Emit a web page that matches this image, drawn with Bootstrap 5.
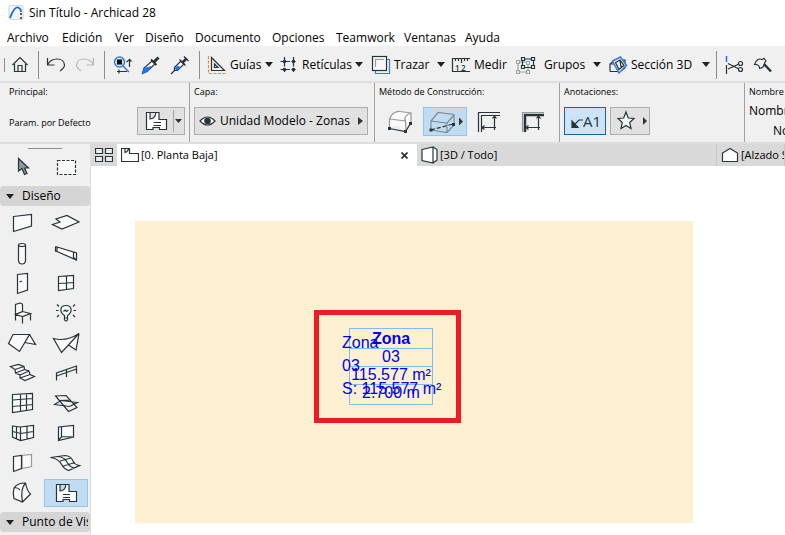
<!DOCTYPE html>
<html lang="es">
<head>
<meta charset="utf-8">
<meta name="viewport" content="width=device-width, initial-scale=1">
<title>Sin Título - Archicad 28</title>
<link href="https://cdn.jsdelivr.net/npm/bootstrap@5.3.0/dist/css/bootstrap.min.css" rel="stylesheet">
<style>
:root{--ink:#27343a;--panel:#f0f0f0;--shade:#d9d9d9;--line:#a0a0a0;--sel:#bfdcf3;--selline:#91c6f4}
body{font-family:"Open Sans","Noto Sans",sans-serif;font-size:12px;line-height:16px;color:#000;background:#fff;overflow:hidden}
button{font:inherit;color:inherit;background:none;border:0;padding:0;white-space:nowrap;text-align:left}
svg{flex:none;display:block;fill:none;stroke:var(--ink);stroke-width:1.2}
svg text{stroke:none;fill:var(--ink)}
.titlebar{height:26px;padding-left:8px;gap:5px}
.menubar{height:20px;padding:3px 0 0 7px;display:grid;align-items:center;grid-template-columns:55px 53px 30px 50px 77px 64px 68px 61px auto}
.menubar a{color:#000;text-decoration:none;white-space:nowrap}
.tools{height:37px;padding:2px 0 0 4px;background:var(--panel);border-bottom:2px solid #dedede;display:grid;align-items:center;
 grid-template-columns:6px 28px 8px 29px 29px 8px 29px 29px 29px 8px 72px 92px 80px 65px 92px 108px 8px 29px 29px}
.tools button{display:flex;align-items:center;gap:3px}
.rule{width:1px;height:28px;background:#8c8c8c}
.grip{width:1px;height:14px;background:#8c8c8c}
.caret{border:4px solid transparent;border-top:5px solid #222;border-bottom:0;margin-left:auto;margin-right:6px}
.caret.wide{margin-right:9px}
.arrow{border:4px solid transparent;border-left:5px solid #333;border-right:0}
.info{height:61px;background:var(--panel);border-bottom:2px solid #dedede;overflow:hidden}
.pane{flex:0 0 185px;height:59px;padding:1px 4px 0;border-left:1px solid var(--line);white-space:nowrap}
.pane:first-child{flex-basis:189px;padding-left:9px;border-left:0}
.pane:last-child{flex:1 0 0;min-width:0}
.cap{font-size:9px;line-height:16px;height:23px}
.cap.tight{height:19px}
.ctl{height:29px}
.box{height:28px;background:#e1e1e1;border:1px solid #adadad}
.box.wide{width:174px;padding:0 4px}
.box.on{background:#cce4f7;border-color:#1463a5}
.meth{width:44px;height:29px;display:flex;align-items:center;justify-content:center}
.meth.on,.tool.on{background:var(--sel);border:1px solid var(--selline)}
.side{flex:0 0 91px;background:var(--panel);border-right:1px solid #dcdcdc;overflow:hidden}
.handle{width:34px;height:1px;margin:4px 0 3px 28px;background:#8c8c8c}
.pair{display:grid;grid-template-columns:44px 44px}
.tool{width:44px;height:28px;margin:1px 0;display:flex;align-items:center;justify-content:center}
.tool svg{fill:#fafafa}
.tool.on svg{fill:#fff}
.head{width:100%;height:20px;margin:4px 0 2px;padding-left:6px;background:#d5d5d5;border-radius:4px;display:flex;align-items:center;gap:8px;overflow:hidden}
.head .caret{margin:0}
.head span{overflow:hidden;margin-right:2px}
.tabs{height:22px;background:var(--shade)}
.tabs .views{width:26px;display:flex;align-items:center;justify-content:center}
.doc{flex:0 0 300px;display:flex;align-items:center;gap:2px;padding:0 5px 0 4px;font-size:11px;color:#000;border-right:1px solid #c8c8c8}
.doc.active{background:#fff;border-right:0}
.doc:last-child{flex:1 0 0;min-width:0;overflow:hidden}
.stage{padding:55px 92px 12px 44px;background:#fff}
.zone{background:#fcf0d0}
.frame{position:absolute;left:179px;top:89px;width:147px;height:113px;border:5px solid #ed1c24;color:#00e;font:16px/18px "Liberation Sans",Arial,sans-serif;white-space:nowrap}
.stamp{position:absolute;left:30px;top:13px;width:84px;border-collapse:collapse;text-align:center}
.stamp td,.stamp th{border:1px solid #7dbcf5;padding:0;height:18px;vertical-align:top}
.stamp tr:first-child th,.stamp tr:last-child td{height:20px}
.stamp tr:first-child th{vertical-align:middle}
.stamp span{display:flex;justify-content:center;margin:0 -8px;line-height:16px}
.note{position:absolute;left:23px;top:16px;line-height:23px}
</style>
<script src="https://cdn.jsdelivr.net/npm/bootstrap@5.3.0/dist/js/bootstrap.bundle.min.js"></script>
</head>
<body class="vh-100 d-flex flex-column">
<header>
<div class="titlebar d-flex align-items-center">
<svg width="16" height="16" viewBox="0 0 16 16"><rect x="1" y=".5" width="14" height="14" rx="2" fill="#f4f6f9" stroke="#d4d8de"/><path d="M2 13C5 5 8 2 10 2.5C12 3 13 5 13 7" stroke="#1769dd" stroke-width="1.8"/><path d="M13 8v2M13 12v2" stroke="#24508f" stroke-width="1.8"/></svg>
<span>Sin Título - Archicad 28</span></div>
<nav class="menubar" aria-label="Menú"><a href="#">Archivo</a><a href="#">Edición</a><a href="#">Ver</a><a href="#">Diseño</a><a href="#">Documento</a><a href="#">Opciones</a><a href="#">Teamwork</a><a href="#">Ventanas</a><a href="#">Ayuda</a></nav>
<div class="tools" role="toolbar">
<span class="grip"></span>
<button aria-label="Inicio"><svg width="20" height="20" viewBox="9 55 20 20"><path d="M11.500 65L19 57.500L26.500 65M13.500 64V71.500H24.500V64M17 71V65.500H21V71"/></svg></button>
<span class="rule"></span>
<button aria-label="Deshacer"><svg width="20" height="20" viewBox="46 55 20 20"><path d="M47.500 58V65H54.500M47.500 65C51 57 64 57 64.500 65C64.500 68 62 69.500 60 71"/></svg></button>
<button aria-label="Rehacer"><svg width="20" height="20" viewBox="75 55 20 20"><path stroke="#b4b7b8" d="M93.500 58V65H86.500M93.500 65C90 57 77 57 76.500 65C76.500 68 79 69.500 81 71"/></svg></button>
<span class="rule"></span>
<button aria-label="Buscar y seleccionar"><svg width="20" height="20" viewBox="112 55 20 20"><circle cx="119.500" cy="62" r="5" stroke="#2f7be8" stroke-width="1.500"/><path d="M123 66L129 72" stroke="#2f7be8" stroke-width="1.500"/><rect x="117.500" y="60" width="4" height="4" fill="#111" stroke="#111"/><path d="M126.500 62L129.500 59.500V67M129.500 59.500L131.500 61.500M117 71.500H127M119 69.500V73.500"/></svg></button>
<button aria-label="Tomar parámetros"><svg width="20" height="20" viewBox="141 55 20 20"><path d="M142.500 73.500L144 68L152 61L155 64L147 71.500Z" fill="#fff"/><path d="M143 73L144.500 68.500L150 67L148 70.500Z" fill="#1677ff" stroke="#1677ff"/><path d="M151 59.500L156.500 65" stroke-width="1.800"/><path d="M154 62L158.500 57.500" stroke-width="3"/></svg></button>
<button aria-label="Inyectar parámetros"><svg width="20" height="20" viewBox="170 55 20 20"><path d="M171 74L175 70M174.500 67.500L181 61L184 64L177.500 70.500L174.500 70.500Z" fill="#fff"/><path d="M175.500 68.500L178 66.500L180 67.500L177 70Z" fill="#1677ff" stroke="#1677ff"/><path d="M179.500 59.500L185.500 65.500M184 56.500L188.500 61" stroke-width="1.300"/><path d="M182 63L186.500 58.500" stroke-width="2.500"/></svg></button>
<span class="rule"></span>
<button><svg width="20" height="20" viewBox="207 55 20 20"><path d="M208.500 56V73.500H226" stroke="#f28a1c" stroke-dasharray="3 1.500"/><path d="M211.500 57.500V70.500H224.500ZM214.500 64V67.500H218Z"/></svg>Guías<i class="caret"></i></button>
<button><svg width="20" height="20" viewBox="278 55 20 20"><path d="M283.500 57V73M292.500 57V73M279.500 61.500H296M279.500 69.500H296" stroke-dasharray="4 1.500"/><g fill="#27343a" stroke="none"><circle cx="283.500" cy="61.500" r="1.800"/><circle cx="292.500" cy="61.500" r="1.800"/><circle cx="283.500" cy="69.500" r="1.800"/><circle cx="292.500" cy="69.500" r="1.800"/></g></svg>Retículas<i class="caret wide"></i></button>
<button><svg width="20" height="20" viewBox="371 55 20 20"><path d="M387 59.500H389.500V73.500H375.500V71" stroke="#2f7be8"/><rect x="372.500" y="56.500" width="14" height="14" fill="#f7f7f7"/><path d="M375.500 67V59.500H384" stroke="#999"/></svg>Trazar<i class="caret"></i></button>
<button><svg width="20" height="20" viewBox="451 55 20 20"><path d="M470 58.500H452.500V71.500H470M455.500 58V61M458.500 58V61M461.500 58V63M464.500 58V61M467.500 58V61"/><text x="455" y="70.500" font-size="8" font-weight="600">1</text><text x="461" y="70.500" font-size="8" font-weight="600">2</text></svg>Medir</button>
<button class="gap-2"><svg width="20" height="20" viewBox="516 55 20 20"><path d="M518 62V72H528V62H518" stroke="#a0a3a4"/><path d="M522.500 59H533.500V67.500H522.500Z"/><g fill="#f0f0f0"><path d="M521.500 57.500h3v3h-3zM531.500 57.500h3v3h-3zM521.500 65.500h3v3h-3zM531.500 65.500h3v3h-3z"/><path stroke="#a0a3a4" d="M516.500 60.500h3v3h-3zM516.500 70.500h3v3h-3zM526.500 70.500h3v3h-3zM526.500 61.500h3v3h-3z"/></g></svg>Grupos<i class="caret wide"></i></button>
<button><svg width="20" height="20" viewBox="608 55 20 20"><path d="M610 71.500V64L615 60H625V68L620 71.500H610M610 64H619"/><path d="M612.500 61L620.500 57L626.500 65.500L619 73Z" fill="#f0f0f0" stroke="#2f7be8" stroke-width="1.500"/><path d="M615.500 62.500L620 60L624 65.500L619 69.500ZM620 60L621 67L624 65.500"/></svg>Sección 3D<i class="caret"></i></button>
<span class="rule"></span>
<button aria-label="Recortar"><svg width="20" height="20" viewBox="724 55 20 20"><path d="M726.500 56V62" stroke="#1677ff" stroke-width="1.500"/><path d="M726.500 65V74M728 63.500L739 69M728 69L739 64"/><circle cx="740.500" cy="63.500" r="2"/><circle cx="740.500" cy="69.500" r="2"/></svg></button>
<button aria-label="Dividir"><svg width="20" height="20" viewBox="753 55 20 20"><path d="M754.500 64.500C756 60 759 58 762 59.500L764 58.500L766 61L764.500 63C764.500 66 762 68 759.500 68.500C760 66 757 64 754.500 64.500Z"/><path d="M764 64L771 71.500" stroke-width="2.500"/></svg></button>
</div>
<div class="info d-flex">
<section class="pane"><div class="cap">Principal:</div><div class="ctl d-flex align-items-start justify-content-between"><span class="cap pt-2">Param. por Defecto</span>
<button class="box d-flex align-items-center" aria-label="Zona"><svg width="46" height="26" viewBox="137 108 46 26"><path d="M145.500 112.500H149V119Q154 119 155 112.500H158V119.500H165.500V129.500H158.500V127.500H152V129.500H145.500ZM149 112.500H155M152.500 122.500H160M152.500 125.500H160" fill="#fff"/><path d="M172.500 110V132" stroke="#aaa"/><path d="M174 119H181L177.500 123Z" fill="#333" stroke="none"/></svg></button></div></section>
<section class="pane"><div class="cap">Capa:</div>
<button class="box wide d-flex align-items-center gap-1"><svg width="17" height="14" viewBox="0 0 17 14"><path d="M1 7Q8.500 -1 16 7Q8.500 15 1 7Z" fill="#fff"/><circle cx="8.500" cy="7" r="2.700" fill="#27343a"/></svg>Unidad Modelo - Zonas<i class="arrow ms-auto"></i></button></section>
<section class="pane"><div class="cap">Método de Construcción:</div><div class="ctl d-flex">
<button class="meth" aria-label="Polígono"><svg width="44" height="29" viewBox="379 106 44 29"><path d="M389.500 126V118Q393 110 400 110.500L411 112V122M389.500 118L405.500 120L406 130M405.500 120Q403 115 411 112" stroke="#999" fill="#fafafa"/><path d="M389.500 127.500L405.500 130.500L410.500 122.500"/><path d="M388 126h3v3h-3zM404 129h3v3h-3zM409 121h3v3h-3z" fill="#27343a" stroke="none"/></svg></button>
<button class="meth on" aria-label="Polígono rotado"><svg width="42" height="27" viewBox="424 107 42 27"><path d="M431 129V120L438 111.500L454 113.500V124L447 131.500L431 129M431 120L447 122L454 114M447 122V131" stroke="#7f8b93"/><path d="M431 129L453 123" stroke-dasharray="4 2"/><path d="M429.500 127.500h3v3h-3zM452 122h3v3h-3z" fill="#27343a" stroke="none"/><path d="M459 116.500L463 120.500L459 124.500Z" fill="#333" stroke="none"/></svg></button>
<button class="meth" aria-label="Borde interior"><svg width="44" height="29" viewBox="467 106 44 29"><path d="M478.500 131V111.500H500M481.500 131V114.500H500M482 126.500H496M494.500 115V129M484.500 124.500L482 126.500L484.500 128.500M492.500 117.500L494.500 115L496.500 117.500"/></svg></button>
<button class="meth" aria-label="Línea de referencia"><svg width="44" height="29" viewBox="511 106 44 29"><path d="M522.500 131V111.500H544" stroke="#999"/><path d="M525 131V114H544" stroke-width="2.500"/><path d="M526 126.500H540M538.500 115V129M528.500 124.500L526 126.500L528.500 128.500M536.500 117.500L538.500 115L540.500 117.500"/></svg></button></div></section>
<section class="pane"><div class="cap">Anotaciones:</div><div class="d-flex gap-1">
<button class="box on" aria-label="Etiqueta A1"><svg width="40" height="26" viewBox="566 108 40 26"><path d="M574 126L580 120H584"/><path d="M573 121V127.500H579Z" fill="#27343a"/><text x="584" y="127" font-size="15">A1</text></svg></button>
<button class="box" aria-label="Favoritos"><svg width="38" height="26" viewBox="611 108 38 26"><path d="M626 112L628.300 118L634 118.500L629.700 122.500L631 128.500L626 125.500L621 128.500L622.300 122.500L618 118.500L623.700 118Z" fill="#f8f8f8"/><path d="M643 117L647 121L643 125Z" fill="#333" stroke="none"/></svg></button></div></section>
<section class="pane"><div class="cap tight">Nombre y</div><div>Nombre</div><div class="ps-4 pt-1">No</div></section>
</div>
</header>
<main class="d-flex flex-grow-1 overflow-hidden">
<aside class="side">
<div class="handle"></div>
<div class="pair">
<button class="tool" aria-label="Flecha"><svg width="44" height="28" viewBox="0 153 44 28"><path d="M18.500 158.500V171L22 168.500L24.500 174.500L27 173.500L24.500 168H28.500Z" fill="#8f999e"/></svg></button>
<button class="tool" aria-label="Marco"><svg width="44" height="28" viewBox="44 153 44 28"><rect x="57.500" y="160.500" width="18" height="14" stroke-dasharray="3 1.500"/></svg></button></div>
<button class="head"><i class="caret"></i><span>Diseño</span></button>
<div class="pair">
<button class="tool" aria-label="Muro"><svg width="44" height="30" viewBox="0 208 44 30"><path d="M13.500 216.500L31.500 214.500V226L13.500 231.500Z"/></svg></button>
<button class="tool" aria-label="Forjado"><svg width="44" height="30" viewBox="44 208 44 30"><path d="M52.500 224.500L60 222L56 219L67 215.500L79 222L62 229Z"/></svg></button>
<button class="tool" aria-label="Pilar"><svg width="44" height="30" viewBox="0 238 44 30"><path d="M18.500 245V261Q19 264 22 264Q25 264 25.500 261V245"/><ellipse cx="22" cy="245" rx="3.500" ry="1.500"/></svg></button>
<button class="tool" aria-label="Viga"><svg width="44" height="30" viewBox="44 238 44 30"><path d="M55.500 246.500L76.500 253V260L57 251.500M55.500 246.500V251L57 251.500L57 247M76.500 260L73.500 257.500V252.500"/></svg></button>
<button class="tool" aria-label="Puerta"><svg width="44" height="30" viewBox="0 268 44 30"><path d="M17.500 274.500L27.500 273.500V290L17.500 293.500ZM19.500 282L22 281"/></svg></button>
<button class="tool" aria-label="Ventana"><svg width="44" height="30" viewBox="44 268 44 30"><path d="M58.500 276.500L73.500 275.500V288.500L58.500 290.500ZM66.500 276V289.500M58.500 283.500L73.500 282.500"/></svg></button>
<button class="tool" aria-label="Objeto"><svg width="44" height="30" viewBox="0 298 44 30"><path d="M15.500 320.500V304.500L20 303Q22 303 22.500 304.500V311.500L15.500 314.500L22.500 316.500L30.500 313.500L22.500 311.500M22.500 316.500V323.500M30.500 313.500V320.500"/></svg></button>
<button class="tool" aria-label="Lámpara"><svg width="44" height="30" viewBox="44 298 44 30"><path d="M64.500 318V315.500C59 312 60 305.500 66 305.500C72 305.500 73 312 67.500 315.500V318ZM64.500 318V320Q66 322 67.500 320V318M63.500 311.500L65 310L66.500 311.500L68.500 310M57 304.500L59 306.500M75 304.500L73 306.500M56 310.500H58.500M73.500 310.500H76M57 317L59 315M75 317L73 315"/></svg></button>
<button class="tool" aria-label="Cubierta"><svg width="44" height="30" viewBox="0 328 44 30"><path d="M8.500 343.500L13 334.500H29.500L19.500 351.500ZM29.500 334.500L35.500 344.500L25 342.500"/></svg></button>
<button class="tool" aria-label="Membrana"><svg width="44" height="30" viewBox="44 328 44 30"><path d="M53.500 338.500Q66 342 79 333.500L61.500 352.500ZM79 333.500L76 350L68.500 345"/></svg></button>
<button class="tool" aria-label="Escalera"><svg width="44" height="30" viewBox="0 358 44 30"><path d="M10.500 366.500L18.500 364.500L24 366.500L24.500 369.500L29 371L30 374.500L34.500 376.500L25 380.500L20 378V375L15.500 373L15 369.500ZM15 369.500L24 366.500M15.500 373L24.500 369.500M20 375L29 371M20 378L30 374.500"/></svg></button>
<button class="tool" aria-label="Barandilla"><svg width="44" height="30" viewBox="44 358 44 30"><path d="M56.500 380.500V373L76.500 366V373.500M56.500 376L76.500 369M66.500 369.500V377" fill="none"/></svg></button>
<button class="tool" aria-label="Muro cortina"><svg width="44" height="30" viewBox="0 388 44 30"><path d="M12.500 394.500L32.500 393.500V409.500L12.500 412.500ZM20.500 394V411M26.500 394V410M12.500 400L32.500 398.500M12.500 406.500L32.500 404.500"/></svg></button>
<button class="tool" aria-label="Forma"><svg width="44" height="30" viewBox="44 388 44 30"><path d="M55.500 396L66 395.500L77 407.500L68.500 411.500ZM54.500 404.500L61 400.500L77.500 402.500L69.500 406.500ZM60 400.500L70 400" fill="none"/></svg></button>
<button class="tool" aria-label="Fachada"><svg width="44" height="30" viewBox="0 418 44 30"><path d="M12.500 426L20.500 427L33.500 425.500V437.500L20.500 440.500L12.500 437ZM20.500 427V440M16.500 426.500V438.500M27 426.500V439M12.500 431.500L20.500 433.500L33.500 431.500"/></svg></button>
<button class="tool" aria-label="Abertura"><svg width="44" height="30" viewBox="44 418 44 30"><path d="M58.500 427L73.500 425.500V437L58.500 440.500ZM61.500 427V437L58.500 440M61.500 436.500L73.500 437"/></svg></button>
<button class="tool" aria-label="Panel"><svg width="44" height="30" viewBox="0 448 44 30"><path d="M22 455.500L31.500 454.500V466.500L22 468.500Z" stroke="#999"/><path d="M13.500 456.500L21.500 455.500V468.500L13.500 471.500Z"/></svg></button>
<button class="tool" aria-label="Malla"><svg width="44" height="30" viewBox="44 448 44 30"><path d="M50.500 457.500L65 455.500Q71 456 73 461Q75 465 79.500 465.500L68.500 470.500Q64 469 62 465Q58 458 50.500 457.500ZM57.500 456.500Q65 457 67.500 463Q70 467 74 468M60 461L71 458M63.500 466L75 462.500"/></svg></button>
<button class="tool" aria-label="Morph"><svg width="44" height="30" viewBox="0 478 44 30"><path d="M14 488Q17 483 25.500 483Q27 491 30.500 494L22.500 502L14 498.500Q12.500 493 14 488ZM25.500 483Q20 489 22.500 502M14 488Q18 487 20 490"/></svg></button>
<button class="tool on" aria-label="Zona"><svg width="42" height="26" viewBox="45 480 42 26"><path d="M56.500 484.500H60V491Q65 491 66 484.500H69V491.500H76.500V501.500H69.500V499.500H63V501.500H56.500ZM60 484.500H66M63 494.500H70M63 497.500H70"/></svg></button>
</div>
<button class="head"><i class="caret"></i><span>Punto de Vista</span></button>
</aside>
<div class="d-flex flex-column flex-grow-1 overflow-hidden">
<div class="tabs d-flex" role="tablist">
<button class="views" aria-label="Ventanas abiertas"><svg width="18" height="14" viewBox="0 0 18 14"><path d="M.500 .500h7v5h-7zM10.500 .500h7v5h-7zM.500 8.500h7v5h-7zM10.500 8.500h7v5h-7z" fill="#eee"/></svg></button>
<button class="doc active" role="tab"><svg width="18" height="16" viewBox="0 0 18 16"><path d="M.500 1.500H8.500V6.500H17.500V14.500H.500ZM4 1.500V5.500Q7 5 7.500 1.500" fill="#fff"/></svg>[0. Planta Baja]<svg class="ms-auto me-1" width="7" height="7" viewBox="0 0 7 7"><path d="M.500 .500L6.500 6.500M6.500 .500L.500 6.500" stroke-width="1.700"/></svg></button>
<button class="doc" role="tab"><svg width="17" height="18" viewBox="0 0 17 18"><path d="M1 3.500L12 1V17L1 14.500ZM12 1L16 3.500V14L12 17" fill="#fff"/></svg>[3D / Todo]</button>
<button class="doc" role="tab"><svg width="18" height="14" viewBox="0 0 18 14"><path d="M1.500 13.500V5L9 .500L16.500 5V13.500Z" fill="#fff"/></svg>[Alzado Sur]</button>
</div>
<div class="stage flex-grow-1 d-flex">
<div class="zone flex-grow-1 position-relative">
<div class="frame">
<table class="stamp"><tr><th><span>Zona</span></th></tr><tr><td><span>03</span></td></tr><tr><td><span>115.577 m²</span></td></tr><tr><td><span>2.700 m</span></td></tr></table>
<div class="note">Zona<br>03<br>S: 115.577 m²</div>
</div></div></div></div>
</main>
</body>
</html>
